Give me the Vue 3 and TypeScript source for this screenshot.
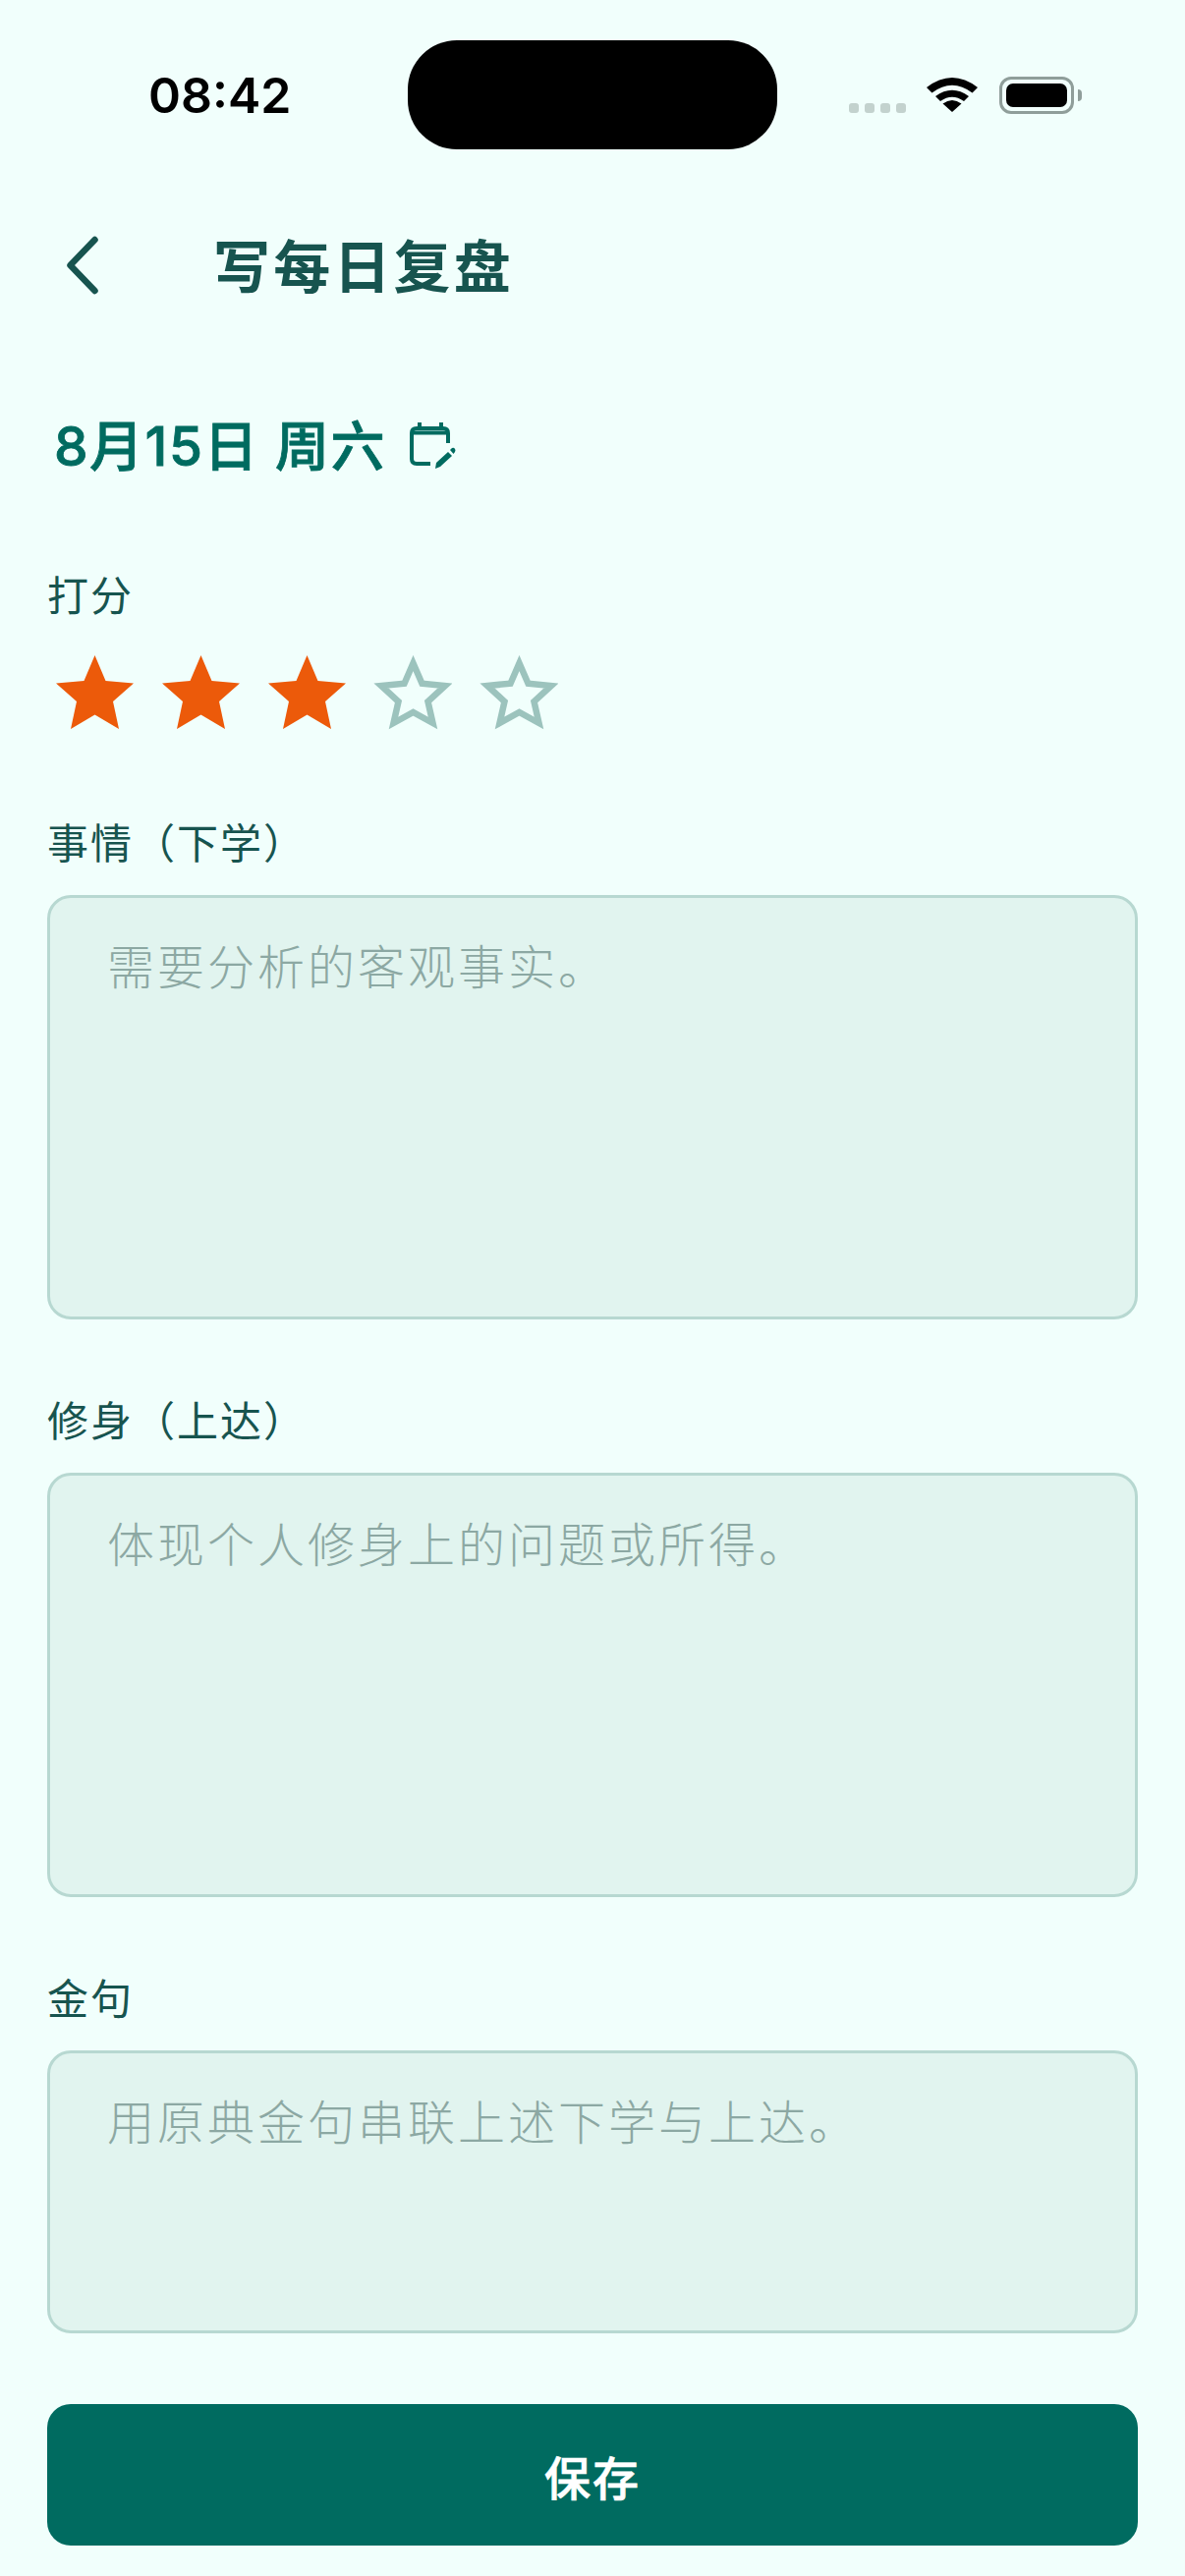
<script setup lang="ts">
interface Field { label: string; placeholder: string; size: string }
const fields: Field[] = [
  { label: '事情（下学）', placeholder: '需要分析的客观事实。', size: 'tall' },
  { label: '修身（上达）', placeholder: '体现个人修身上的问题或所得。', size: 'tall' },
  { label: '金句', placeholder: '用原典金句串联上述下学与上达。', size: 'short' },
]
const stars = [true, true, true, false, false]
const star = 'M39.5 0 L50.5 26 L79 28.5 L58 47 L64 75 L39.5 60.5 L15 75 L21 47 L0 28.5 L28.5 26 Z'
const starOutline = 'M39.5 8 L48.5 28.7 L72 31 L54.5 47 L59.5 69 L39.5 58 L19.5 69 L24.5 47 L7 31 L30.5 28.7 Z'
</script>

<template>
  <div class="page">
    <div class="status">
      <span class="time">08:42</span>
      <div class="island"></div>
      <div class="status-right">
        <div class="signal"><i></i><i></i><i></i><i></i></div>
        <svg class="wifi" width="52" height="38" viewBox="0 0 52 38">
          <path d="M26 37 L16.5 28.5 Q26 21.5 35.5 28.5 Z" fill="#000" />
          <path d="M9 21 Q26 8.5 43 21 L38 26 Q26 17.5 14 26 Z" fill="#000" />
          <path d="M0 12 Q26 -8 52 12 L46.5 17.5 Q26 2 5.5 17.5 Z" fill="#000" />
        </svg>
        <div class="battery"><div class="cell"></div><div class="nub"></div></div>
      </div>
    </div>

    <header class="head">
      <svg class="back" width="36" height="60" viewBox="0 0 36 60">
        <path d="M32.5 4 L7.5 30 L32.5 56" fill="none" stroke="#17544f" stroke-width="6.5" stroke-linecap="round" stroke-linejoin="round" />
      </svg>
      <h1>写每日复盘</h1>
    </header>

    <div class="date">
      <span>8月15日 周六</span>
      <svg class="cal" width="48" height="50" viewBox="0 0 48 50">
        <g fill="none" stroke="#006b60" stroke-width="4">
          <path d="M21 42 H7 Q2 42 2 37 V11 Q2 6 7 6 H34 Q39 6 39 11 V21" />
          <path d="M2 10.5 H39" />
          <path d="M10 0 V7 M32 0 V7" />
        </g>
        <path d="M26 47 L27 41 L39 30 L43 34 L31 45 Z M41 28 L43 26 Q45 25 46 27 Q47 28 46 30 L44.5 32 Z" fill="#006b60" />
      </svg>
    </div>

    <div class="label rate-label">打分</div>
    <div class="stars">
      <svg v-for="(on, i) in stars" :key="i" class="star" width="80" height="78" viewBox="-1 0 80 78">
        <path v-if="on" :d="star" fill="#ec5a0a" />
        <path v-else :d="starOutline" fill="none" stroke="#9cc3bd" stroke-width="6.5" stroke-miterlimit="10" />
      </svg>
    </div>

    <section v-for="f in fields" :key="f.label" class="field">
      <div class="label">{{ f.label }}</div>
      <div class="box" :class="f.size">{{ f.placeholder }}</div>
    </section>

    <button class="save" type="button">保存</button>
  </div>
</template>

<style>
html, body { margin: 0; background: #f1fffc; }
</style>

<style scoped>
.page {
  width: 1206px;
  height: 2622px;
  box-sizing: border-box;
  padding: 0 48px;
  background: #f1fffc;
  font-family: "Noto Sans CJK SC", "Noto Sans", sans-serif;
  position: relative;
  overflow: hidden;
}
.status {
  height: 228px;
  display: flex;
  justify-content: space-between;
  align-items: flex-start;
}
.time {
  margin: 72px 0 0 103px;
  font: 600 50px/1 Inter, "Liberation Sans", sans-serif;
  color: #000;
}
.island {
  position: absolute;
  left: 415px;
  top: 41px;
  width: 376px;
  height: 111px;
  border-radius: 50px;
  background: #000;
}
.status-right {
  display: flex;
  align-items: flex-start;
  margin: 78px 65px 0 0;
}
.signal { display: flex; gap: 6px; margin: 27px 0 0 0; }
.signal i {
  display: block;
  width: 10px;
  height: 10px;
  border-radius: 3px;
  background: #c3d2ce;
}
.wifi { margin: -1px 0 0 21px; }
.battery {
  position: relative;
  box-sizing: border-box;
  width: 76px;
  height: 38px;
  margin: 0 0 0 22px;
  padding: 4px;
  border: 3px solid #8f9e9a;
  border-radius: 12px;
  display: flex;
}
.cell { flex: 1; background: #000; border-radius: 7px; }
.nub {
  position: absolute;
  right: -11px;
  top: 10px;
  width: 4px;
  height: 12px;
  background: #8f9e9a;
  border-radius: 0 4px 4px 0;
}
.head {
  display: flex;
  align-items: center;
  height: 80px;
}
.back { margin: 4px 0 0 16px; }
h1 {
  margin: 0 0 0 117px;
  font-size: 58px;
  line-height: 78px;
  font-weight: 700;
  letter-spacing: 3.2px;
  color: #17544f;
}
.date {
  display: flex;
  align-items: center;
  margin: 102px 0 0 7px;
  height: 80px;
  font-family: Inter, "Noto Sans CJK SC", sans-serif;
  font-size: 55px;
  font-weight: 500;
  letter-spacing: 1.5px;
  -webkit-text-stroke: 0.8px #006b60;
  color: #006b60;
  white-space: nowrap;
}
.cal { margin: 10px 0 0 24px; overflow: visible; }
.label {
  height: 60px;
  font-size: 42px;
  line-height: 58px;
  letter-spacing: 2px;
  color: #17544f;
}
.rate-label { margin-top: 85px; }
.stars {
  display: flex;
  gap: 28px;
  margin: 32px 0 0 8px;
  height: 85px;
}
.star { display: block; }
.field { margin-top: 75px; }
.field + .field { margin-top: 72px; }
.box {
  box-sizing: border-box;
  margin-top: 24px;
  padding: 37px 58px;
  background: #e1f4ef;
  border: 3px solid #b7d8d1;
  border-radius: 24px;
  font-size: 48px;
  font-weight: 300;
  line-height: 60px;
  letter-spacing: 3px;
  color: #8ca8a3;
}
.tall { height: 432px; }
.short { height: 288px; }
.save {
  display: block;
  width: 100%;
  height: 144px;
  margin-top: 72px;
  border: 0;
  border-radius: 24px;
  background: #006b60;
  color: #fff;
  font: 500 47px/1 "Noto Sans CJK SC", sans-serif;
  -webkit-text-stroke: 0.7px #fff;
  letter-spacing: 2px;
}
</style>
